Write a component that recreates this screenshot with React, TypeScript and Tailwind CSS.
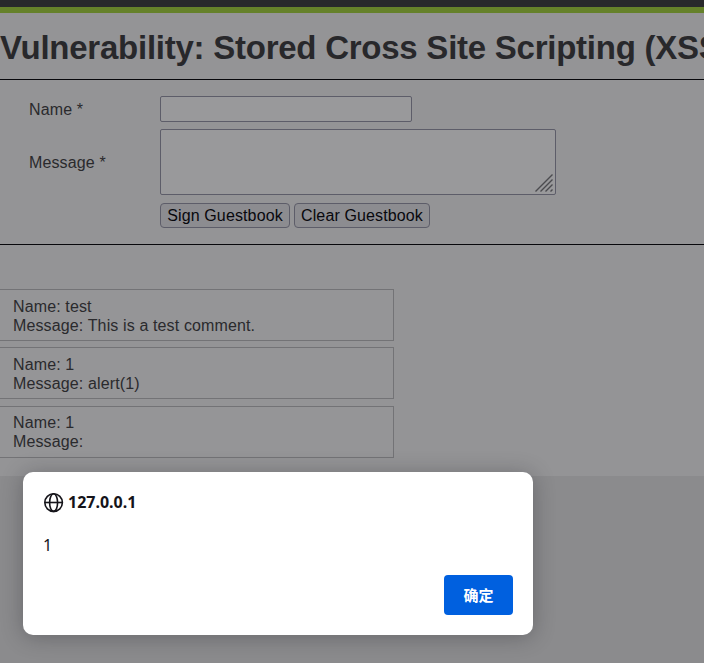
import React from "react";

const entries = [
  { name: "test", message: "This is a test comment.", spacing: "mb-1.5 pt-[7px]" },
  { name: "1", message: "alert(1)", spacing: "mb-[7px] pt-[7px]" },
  { name: "1", message: "", spacing: "pt-1.5" },
];

function GuestbookForm() {
  return (
    <form className="h-[166px] border-y border-[#08080c] pt-4 pl-[29px]">
      <div className="flex h-[26px] items-center">
        <label className="w-[131px]">Name *</label>
        <input
          type="text"
          className="h-[26px] w-[252px] rounded-[2px] border border-[#5d5d69] bg-[#99999b] px-1 outline-none"
        />
      </div>
      <div className="mt-[7px] flex h-[66px] items-center">
        <label className="w-[131px]">Message *</label>
        <div className="relative h-[66px] w-[396px]">
          <textarea className="block h-full w-full resize-none rounded-[2px] border border-[#5d5d69] bg-[#99999b] outline-none" />
          <svg
            className="pointer-events-none absolute right-[3px] bottom-[3px]"
            width="18"
            height="18"
            viewBox="0 0 18 18"
            fill="none"
            stroke="#4b4b4f"
            strokeWidth="1.4"
          >
            <path d="M.5 17.5 17.5.5M5.5 17.5l12-12M10.5 17.5l7-7M15.5 17.5l2-2" />
          </svg>
        </div>
      </div>
      <div className="mt-2 ml-[131px] flex gap-1 text-[#08080d]">
        <button type="button" className="h-[25px] w-[130px] rounded-[4px] border border-[#5d5d69] bg-[#8c8c90] leading-[23px] tracking-[0.13px] whitespace-nowrap">
          Sign Guestbook
        </button>
        <button type="button" className="h-[25px] w-[136px] rounded-[4px] border border-[#5d5d69] bg-[#8c8c90] leading-[23px] tracking-[0.13px] whitespace-nowrap">
          Clear Guestbook
        </button>
      </div>
    </form>
  );
}

function AlertDialog() {
  return (
    <div
      role="alertdialog"
      className="absolute top-[472px] left-[23px] flex h-[163px] w-[510px] flex-col rounded-[10px] bg-white px-5 pt-5 pb-5 font-['Noto_Sans','Noto_Sans_CJK_SC',sans-serif] text-[15px] tracking-normal text-[#15141a] shadow-[0_2px_22px_rgba(20,20,26,0.3)]"
    >
      <div className="flex h-[21px] items-center gap-1 pl-px">
        <svg width="20" height="20" viewBox="0 0 20 20" fill="none" stroke="#15141a" strokeWidth="1.6">
          <circle cx="9.6" cy="9.6" r="8.8" />
          <ellipse cx="9.6" cy="9.6" rx="4" ry="8.8" />
          <path d="M1 9.5h17.6" />
        </svg>
        <span className="text-base leading-[21px] font-bold">127.0.0.1</span>
      </div>
      <div className="mt-[22px] h-[21px] text-base leading-[21px]">1</div>
      <button type="button" className="mt-auto h-10 w-[69px] self-end rounded-[4px] bg-[#0060df] pb-px font-['Noto_Sans_CJK_SC',sans-serif] font-bold text-white">
        确定
      </button>
    </div>
  );
}

export default function App() {
  return (
    <div className="relative h-[663px] w-[704px] overflow-hidden bg-[#8b8b8d] font-['Liberation_Sans',Arial,sans-serif] text-base leading-[19px] tracking-[0.13px] text-[#2a2a2d]">
      <header className="h-[13px] border-b-[6px] border-[#65812a] bg-[#28282b]" />
      <main className="h-[463px] bg-[#949496]">
        <h1 className="h-[66px] pt-[15px] text-[33px] leading-[40px] font-bold tracking-[-0.25px] whitespace-nowrap text-[#28282b]">
          Vulnerability: Stored Cross Site Scripting (XSS)
        </h1>
        <GuestbookForm />
        <section className="pt-11">
          {entries.map((entry, i) => (
            <article
              key={i}
              className={`h-[52px] w-[394px] border border-l-0 border-[#737376] bg-[#959597] pl-[13px] ${entry.spacing}`}
            >
              <p>Name: {entry.name}</p>
              <p>Message: {entry.message}</p>
            </article>
          ))}
        </section>
      </main>
      <AlertDialog />
    </div>
  );
}
